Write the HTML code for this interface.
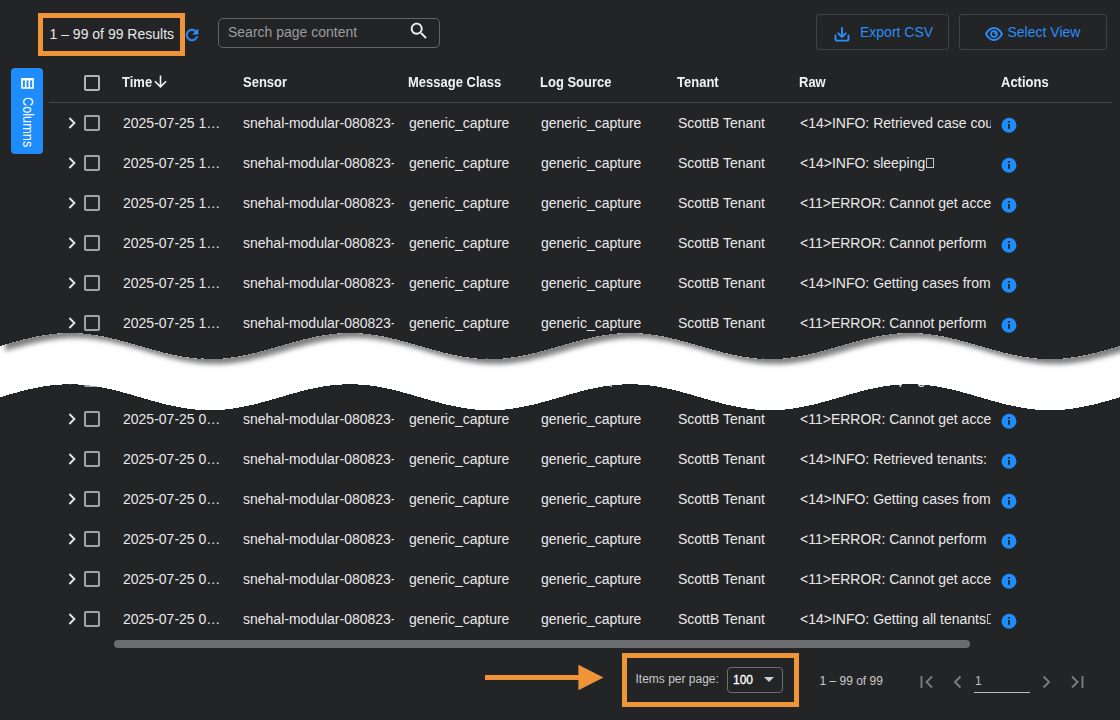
<!DOCTYPE html>
<html><head><meta charset="utf-8"><title>Results</title>
<style>
html,body{margin:0;padding:0;}
body{width:1120px;height:720px;overflow:hidden;background:#232426;font-family:"Liberation Sans",sans-serif;color:#e9e9ea;position:relative;font-size:14px;}
.abs{position:absolute;}
.hl{position:absolute;border:5px solid #f0943a;box-sizing:border-box;}
.res{position:absolute;left:49.5px;top:26px;font-size:14px;line-height:16px;color:#e9e9ea;white-space:nowrap;}
.search{position:absolute;left:218px;top:18px;width:222px;height:30px;box-sizing:border-box;border:1px solid #636467;border-radius:5px;}
.search span{position:absolute;left:9px;top:5px;font-size:14px;line-height:16px;color:#9b9c9e;white-space:nowrap;}
.btn{position:absolute;top:14px;height:36px;box-sizing:border-box;border:1px solid #404145;border-radius:3px;color:#2b8df7;font-size:14px;}
.btn span{position:absolute;top:9px;line-height:16px;white-space:nowrap;}
.coltab{position:absolute;left:11px;top:68px;width:32px;height:86px;background:#1e8cfa;border-radius:4px;}
.coltab span{position:absolute;left:0;top:0;transform-origin:0 0;transform:translate(23.5px,29px) rotate(90deg) scale(0.91,1);font-size:14px;line-height:14px;color:#fff;white-space:nowrap;}
.th{position:absolute;transform:scaleY(1.1);transform-origin:0 12.5px;top:75px;font-size:13px;font-weight:bold;line-height:16px;color:#f2f2f2;white-space:nowrap;}
.cb{position:absolute;left:84px;width:16px;height:16px;box-sizing:border-box;border:2px solid #a4a4a5;border-radius:2px;}
.hdrline{position:absolute;left:49px;top:102px;width:1063px;height:1px;background:#46474a;}
.row{position:absolute;left:0;width:1120px;height:40px;}
.row .cb{top:12px;}
.row .chev{position:absolute;left:68px;top:14.3px;width:8px;height:12px;}
.row .c{position:absolute;top:12px;line-height:16px;font-size:14px;white-space:nowrap;overflow:hidden;color:#e9e9ea;}
.c1{left:123px;width:100px;}
.c2{left:243px;width:150.500px;}
.c3{left:409px;width:120px;}
.c4{left:541px;width:120px;}
.c5{left:678px;width:110px;}
.c6{left:800px;width:191px;}
.row .info{position:absolute;left:1001px;top:13.5px;width:16px;height:16px;}
.nb{display:inline-block;width:6px;height:8px;border:1px solid #c4c4c5;margin-left:1px;vertical-align:0;box-sizing:content-box;}
.sb{position:absolute;left:114px;top:640px;width:856px;height:8px;border-radius:4px;background:#6b6c6e;}
.foot{position:absolute;font-size:12px;line-height:14px;color:#c9c9ca;white-space:nowrap;}
.sel{position:absolute;left:727px;top:667px;width:56px;height:26px;box-sizing:border-box;border:1px solid #6d6e70;border-radius:4px;}
.sel span{position:absolute;left:5px;top:4.500px;font-size:12px;line-height:14px;color:#fff;-webkit-text-stroke:0.300px #fff;}
.pin{position:absolute;left:974px;top:692px;width:56px;height:1px;background:#bdbdbe;}
</style></head><body>

<div class="hl" style="left:38px;top:13px;width:147px;height:43px;"></div>
<div class="res">1 – 99 of 99 Results</div>
<svg class="abs" style="left:182.500px;top:25.800px;width:18px;height:18px" viewBox="0 0 24 24"><path fill="#2b8df7" stroke="#2b8df7" stroke-width="0.700" d="M17.65 6.35C16.2 4.9 14.21 4 12 4c-4.42 0-7.99 3.58-7.99 8s3.57 8 7.99 8c3.73 0 6.84-2.55 7.73-6h-2.08c-.82 2.33-3.04 4-5.65 4-3.31 0-6-2.690-6-6s2.690-6 6-6c1.660 0 3.140.69 4.220 1.780L13 11h7V4l-2.350 2.350z"/></svg>
<div class="search"><span>Search page content</span>
<svg class="abs" style="left:188.500px;top:0.800px;width:22px;height:22px" viewBox="0 0 24 24"><path fill="#f0f0f0" d="M15.5 14h-.79l-.28-.27C15.410 12.590 16 11.110 16 9.500 16 5.910 13.090 3 9.500 3S3 5.910 3 9.500 5.910 16 9.500 16c1.610 0 3.090-.59 4.230-1.570l.27.28v.79l5 4.990L20.490 19l-4.990-5zm-6 0C7.010 14 5 11.990 5 9.500S7.010 5 9.500 5 14 7.010 14 9.500 11.990 14 9.500 14z"/></svg>
</div>

<div class="btn" style="left:816px;width:133px;">
<svg class="abs" style="left:17px;top:11.500px;width:16px;height:15px" viewBox="0 0 16 15"><path d="M8 1 V9.800 M4.300 6.300 L8 10 L11.700 6.300 M1.500 8.500 V12 Q1.500 13.600 3.100 13.600 H12.900 Q14.500 13.600 14.500 12 V8.500" fill="none" stroke="#2b8df7" stroke-width="1.900" stroke-linecap="round" stroke-linejoin="round"/></svg>
<span style="left:43px">Export CSV</span></div>
<div class="btn" style="left:959px;width:148px;">
<svg class="abs" style="left:25px;top:11.800px;width:18px;height:14px" viewBox="0 0 18 14"><path d="M1 7 C3.300 2.700 6.300 1 9 1 S14.700 2.700 17 7 C14.700 11.300 11.700 13 9 13 S3.300 11.300 1 7 Z" fill="none" stroke="#2b8df7" stroke-width="1.800" stroke-linejoin="round"/><circle cx="9" cy="7" r="2.900" fill="none" stroke="#2b8df7" stroke-width="1.700"/><circle cx="10" cy="6.200" r="1" fill="#2b8df7"/></svg>
<span style="left:47.500px">Select View</span></div>

<div class="coltab">
<svg class="abs" style="left:9.500px;top:10px;width:13px;height:11px" viewBox="0 0 13 11"><path d="M1 1.200 H12 V10 H1 Z M4.700 1 V10 M8.300 1 V10" fill="none" stroke="#fff" stroke-width="1.700"/><path d="M0.200 0.200 H12.800 V2.400 H0.200 Z" fill="#fff"/></svg>
<span>Columns</span></div>

<span class="cb" style="top:75px;border-color:#b4b4b5"></span>
<div class="th" style="left:122px">Time</div>
<svg class="abs" style="left:154.200px;top:74.900px;width:13px;height:13px" viewBox="0 0 13 13"><path d="M6.500 0.500 V12 M0.900 6.300 L6.500 11.900 L12.100 6.300" fill="none" stroke="#f2f2f2" stroke-width="1.600"/></svg>
<div class="th" style="left:243px">Sensor</div>
<div class="th" style="left:408px">Message Class</div>
<div class="th" style="left:540px">Log Source</div>
<div class="th" style="left:677px">Tenant</div>
<div class="th" style="left:799px">Raw</div>
<div class="th" style="left:1001px">Actions</div>
<div class="hdrline"></div>

<div class="row" style="top:103px">
<svg class="chev" viewBox="0 0 8 12"><path d="M1.4 1 L6.4 6 L1.4 11" fill="none" stroke="#e6e6e6" stroke-width="1.9"/></svg>
<span class="cb"></span>
<span class="c c1">2025-07-25 1…</span><span class="c c2">snehal-modular-080823-a1</span><span class="c c3">generic_capture</span><span class="c c4">generic_capture</span><span class="c c5">ScottB Tenant</span><span class="c c6">&lt;14&gt;INFO: Retrieved case count</span>
<svg class="info" viewBox="0 0 16 16"><circle cx="8" cy="8.200" r="7.450" fill="#1e8cfa"/><rect x="7.1" y="7" width="1.8" height="5" fill="#232426"/><rect x="7.1" y="4" width="1.8" height="1.8" fill="#232426"/></svg>
</div><div class="row" style="top:143px">
<svg class="chev" viewBox="0 0 8 12"><path d="M1.4 1 L6.4 6 L1.4 11" fill="none" stroke="#e6e6e6" stroke-width="1.9"/></svg>
<span class="cb"></span>
<span class="c c1">2025-07-25 1…</span><span class="c c2">snehal-modular-080823-a1</span><span class="c c3">generic_capture</span><span class="c c4">generic_capture</span><span class="c c5">ScottB Tenant</span><span class="c c6">&lt;14&gt;INFO: sleeping<i class=nb></i></span>
<svg class="info" viewBox="0 0 16 16"><circle cx="8" cy="8.200" r="7.450" fill="#1e8cfa"/><rect x="7.1" y="7" width="1.8" height="5" fill="#232426"/><rect x="7.1" y="4" width="1.8" height="1.8" fill="#232426"/></svg>
</div><div class="row" style="top:183px">
<svg class="chev" viewBox="0 0 8 12"><path d="M1.4 1 L6.4 6 L1.4 11" fill="none" stroke="#e6e6e6" stroke-width="1.9"/></svg>
<span class="cb"></span>
<span class="c c1">2025-07-25 1…</span><span class="c c2">snehal-modular-080823-a1</span><span class="c c3">generic_capture</span><span class="c c4">generic_capture</span><span class="c c5">ScottB Tenant</span><span class="c c6">&lt;11&gt;ERROR: Cannot get access</span>
<svg class="info" viewBox="0 0 16 16"><circle cx="8" cy="8.200" r="7.450" fill="#1e8cfa"/><rect x="7.1" y="7" width="1.8" height="5" fill="#232426"/><rect x="7.1" y="4" width="1.8" height="1.8" fill="#232426"/></svg>
</div><div class="row" style="top:223px">
<svg class="chev" viewBox="0 0 8 12"><path d="M1.4 1 L6.4 6 L1.4 11" fill="none" stroke="#e6e6e6" stroke-width="1.9"/></svg>
<span class="cb"></span>
<span class="c c1">2025-07-25 1…</span><span class="c c2">snehal-modular-080823-a1</span><span class="c c3">generic_capture</span><span class="c c4">generic_capture</span><span class="c c5">ScottB Tenant</span><span class="c c6">&lt;11&gt;ERROR: Cannot perform</span>
<svg class="info" viewBox="0 0 16 16"><circle cx="8" cy="8.200" r="7.450" fill="#1e8cfa"/><rect x="7.1" y="7" width="1.8" height="5" fill="#232426"/><rect x="7.1" y="4" width="1.8" height="1.8" fill="#232426"/></svg>
</div><div class="row" style="top:263px">
<svg class="chev" viewBox="0 0 8 12"><path d="M1.4 1 L6.4 6 L1.4 11" fill="none" stroke="#e6e6e6" stroke-width="1.9"/></svg>
<span class="cb"></span>
<span class="c c1">2025-07-25 1…</span><span class="c c2">snehal-modular-080823-a1</span><span class="c c3">generic_capture</span><span class="c c4">generic_capture</span><span class="c c5">ScottB Tenant</span><span class="c c6">&lt;14&gt;INFO: Getting cases from</span>
<svg class="info" viewBox="0 0 16 16"><circle cx="8" cy="8.200" r="7.450" fill="#1e8cfa"/><rect x="7.1" y="7" width="1.8" height="5" fill="#232426"/><rect x="7.1" y="4" width="1.8" height="1.8" fill="#232426"/></svg>
</div><div class="row" style="top:303px">
<svg class="chev" viewBox="0 0 8 12"><path d="M1.4 1 L6.4 6 L1.4 11" fill="none" stroke="#e6e6e6" stroke-width="1.9"/></svg>
<span class="cb"></span>
<span class="c c1">2025-07-25 1…</span><span class="c c2">snehal-modular-080823-a1</span><span class="c c3">generic_capture</span><span class="c c4">generic_capture</span><span class="c c5">ScottB Tenant</span><span class="c c6">&lt;11&gt;ERROR: Cannot perform</span>
<svg class="info" viewBox="0 0 16 16"><circle cx="8" cy="8.200" r="7.450" fill="#1e8cfa"/><rect x="7.1" y="7" width="1.8" height="5" fill="#232426"/><rect x="7.1" y="4" width="1.8" height="1.8" fill="#232426"/></svg>
</div><div class="row" style="top:343px">
<svg class="chev" viewBox="0 0 8 12"><path d="M1.4 1 L6.4 6 L1.4 11" fill="none" stroke="#e6e6e6" stroke-width="1.9"/></svg>
<span class="cb"></span>
<span class="c c1">2025-07-25 1…</span><span class="c c2">snehal-modular-080823-a1</span><span class="c c3">generic_capture</span><span class="c c4">generic_capture</span><span class="c c5">ScottB Tenant</span><span class="c c6">&lt;14&gt;INFO: Getting cases from</span>
<svg class="info" viewBox="0 0 16 16"><circle cx="8" cy="8.200" r="7.450" fill="#1e8cfa"/><rect x="7.1" y="7" width="1.8" height="5" fill="#232426"/><rect x="7.1" y="4" width="1.8" height="1.8" fill="#232426"/></svg>
</div>
<div class="row" style="top:359px">
<svg class="chev" viewBox="0 0 8 12"><path d="M1.4 1 L6.4 6 L1.4 11" fill="none" stroke="#e6e6e6" stroke-width="1.9"/></svg>
<span class="cb"></span>
<span class="c c1">2025-07-25 0…</span><span class="c c2">snehal-modular-080823-a1</span><span class="c c3">generic_capture</span><span class="c c4">generic_capture</span><span class="c c5">ScottB Tenant</span><span class="c c6">&lt;14&gt;INFO: sleeping<i class=nb></i></span>
<svg class="info" viewBox="0 0 16 16"><circle cx="8" cy="8.200" r="7.450" fill="#1e8cfa"/><rect x="7.1" y="7" width="1.8" height="5" fill="#232426"/><rect x="7.1" y="4" width="1.8" height="1.8" fill="#232426"/></svg>
</div><div class="row" style="top:399px">
<svg class="chev" viewBox="0 0 8 12"><path d="M1.4 1 L6.4 6 L1.4 11" fill="none" stroke="#e6e6e6" stroke-width="1.9"/></svg>
<span class="cb"></span>
<span class="c c1">2025-07-25 0…</span><span class="c c2">snehal-modular-080823-a1</span><span class="c c3">generic_capture</span><span class="c c4">generic_capture</span><span class="c c5">ScottB Tenant</span><span class="c c6">&lt;11&gt;ERROR: Cannot get access</span>
<svg class="info" viewBox="0 0 16 16"><circle cx="8" cy="8.200" r="7.450" fill="#1e8cfa"/><rect x="7.1" y="7" width="1.8" height="5" fill="#232426"/><rect x="7.1" y="4" width="1.8" height="1.8" fill="#232426"/></svg>
</div><div class="row" style="top:439px">
<svg class="chev" viewBox="0 0 8 12"><path d="M1.4 1 L6.4 6 L1.4 11" fill="none" stroke="#e6e6e6" stroke-width="1.9"/></svg>
<span class="cb"></span>
<span class="c c1">2025-07-25 0…</span><span class="c c2">snehal-modular-080823-a1</span><span class="c c3">generic_capture</span><span class="c c4">generic_capture</span><span class="c c5">ScottB Tenant</span><span class="c c6">&lt;14&gt;INFO: Retrieved tenants:</span>
<svg class="info" viewBox="0 0 16 16"><circle cx="8" cy="8.200" r="7.450" fill="#1e8cfa"/><rect x="7.1" y="7" width="1.8" height="5" fill="#232426"/><rect x="7.1" y="4" width="1.8" height="1.8" fill="#232426"/></svg>
</div><div class="row" style="top:479px">
<svg class="chev" viewBox="0 0 8 12"><path d="M1.4 1 L6.4 6 L1.4 11" fill="none" stroke="#e6e6e6" stroke-width="1.9"/></svg>
<span class="cb"></span>
<span class="c c1">2025-07-25 0…</span><span class="c c2">snehal-modular-080823-a1</span><span class="c c3">generic_capture</span><span class="c c4">generic_capture</span><span class="c c5">ScottB Tenant</span><span class="c c6">&lt;14&gt;INFO: Getting cases from</span>
<svg class="info" viewBox="0 0 16 16"><circle cx="8" cy="8.200" r="7.450" fill="#1e8cfa"/><rect x="7.1" y="7" width="1.8" height="5" fill="#232426"/><rect x="7.1" y="4" width="1.8" height="1.8" fill="#232426"/></svg>
</div><div class="row" style="top:519px">
<svg class="chev" viewBox="0 0 8 12"><path d="M1.4 1 L6.4 6 L1.4 11" fill="none" stroke="#e6e6e6" stroke-width="1.9"/></svg>
<span class="cb"></span>
<span class="c c1">2025-07-25 0…</span><span class="c c2">snehal-modular-080823-a1</span><span class="c c3">generic_capture</span><span class="c c4">generic_capture</span><span class="c c5">ScottB Tenant</span><span class="c c6">&lt;11&gt;ERROR: Cannot perform</span>
<svg class="info" viewBox="0 0 16 16"><circle cx="8" cy="8.200" r="7.450" fill="#1e8cfa"/><rect x="7.1" y="7" width="1.8" height="5" fill="#232426"/><rect x="7.1" y="4" width="1.8" height="1.8" fill="#232426"/></svg>
</div><div class="row" style="top:559px">
<svg class="chev" viewBox="0 0 8 12"><path d="M1.4 1 L6.4 6 L1.4 11" fill="none" stroke="#e6e6e6" stroke-width="1.9"/></svg>
<span class="cb"></span>
<span class="c c1">2025-07-25 0…</span><span class="c c2">snehal-modular-080823-a1</span><span class="c c3">generic_capture</span><span class="c c4">generic_capture</span><span class="c c5">ScottB Tenant</span><span class="c c6">&lt;11&gt;ERROR: Cannot get access</span>
<svg class="info" viewBox="0 0 16 16"><circle cx="8" cy="8.200" r="7.450" fill="#1e8cfa"/><rect x="7.1" y="7" width="1.8" height="5" fill="#232426"/><rect x="7.1" y="4" width="1.8" height="1.8" fill="#232426"/></svg>
</div><div class="row" style="top:599px">
<svg class="chev" viewBox="0 0 8 12"><path d="M1.4 1 L6.4 6 L1.4 11" fill="none" stroke="#e6e6e6" stroke-width="1.9"/></svg>
<span class="cb"></span>
<span class="c c1">2025-07-25 0…</span><span class="c c2">snehal-modular-080823-a1</span><span class="c c3">generic_capture</span><span class="c c4">generic_capture</span><span class="c c5">ScottB Tenant</span><span class="c c6">&lt;14&gt;INFO: Getting all tenants<i class=nb></i></span>
<svg class="info" viewBox="0 0 16 16"><circle cx="8" cy="8.200" r="7.450" fill="#1e8cfa"/><rect x="7.1" y="7" width="1.8" height="5" fill="#232426"/><rect x="7.1" y="4" width="1.8" height="1.8" fill="#232426"/></svg>
</div>

<div class="sb"></div>

<svg class="abs" style="left:0;top:300px;width:1120px;height:130px" viewBox="0 300 1120 130">
<defs><filter id="sh" x="-5%" y="-20%" width="110%" height="160%"><feGaussianBlur stdDeviation="2.500"/></filter>
<clipPath id="bandclip"><path d="M0,346.0 L4,344.8 L8,343.7 L12,342.5 L16,341.4 L20,340.4 L24,339.3 L28,338.4 L32,337.4 L36,336.6 L40,335.8 L44,335.2 L48,334.6 L52,334.0 L56,333.6 L60,333.3 L64,333.1 L68,333.0 L72,333.0 L76,333.1 L80,333.3 L84,333.6 L88,334.0 L92,334.6 L96,335.2 L100,335.8 L104,336.6 L108,337.4 L112,338.4 L116,339.3 L120,340.4 L124,341.4 L128,342.5 L132,343.7 L136,344.8 L140,346.0 L144,347.2 L148,348.3 L152,349.5 L156,350.6 L160,351.6 L164,352.7 L168,353.6 L172,354.6 L176,355.4 L180,356.2 L184,356.8 L188,357.4 L192,358.0 L196,358.4 L200,358.7 L204,358.9 L208,359.0 L212,359.0 L216,358.9 L220,358.7 L224,358.4 L228,358.0 L232,357.4 L236,356.8 L240,356.2 L244,355.4 L248,354.6 L252,353.6 L256,352.7 L260,351.6 L264,350.6 L268,349.5 L272,348.3 L276,347.2 L280,346.0 L284,344.8 L288,343.7 L292,342.5 L296,341.4 L300,340.4 L304,339.3 L308,338.4 L312,337.4 L316,336.6 L320,335.8 L324,335.2 L328,334.6 L332,334.0 L336,333.6 L340,333.3 L344,333.1 L348,333.0 L352,333.0 L356,333.1 L360,333.3 L364,333.6 L368,334.0 L372,334.6 L376,335.2 L380,335.8 L384,336.6 L388,337.4 L392,338.4 L396,339.3 L400,340.4 L404,341.4 L408,342.5 L412,343.7 L416,344.8 L420,346.0 L424,347.2 L428,348.3 L432,349.5 L436,350.6 L440,351.6 L444,352.7 L448,353.6 L452,354.6 L456,355.4 L460,356.2 L464,356.8 L468,357.4 L472,358.0 L476,358.4 L480,358.7 L484,358.9 L488,359.0 L492,359.0 L496,358.9 L500,358.7 L504,358.4 L508,358.0 L512,357.4 L516,356.8 L520,356.2 L524,355.4 L528,354.6 L532,353.6 L536,352.7 L540,351.6 L544,350.6 L548,349.5 L552,348.3 L556,347.2 L560,346.0 L564,344.8 L568,343.7 L572,342.5 L576,341.4 L580,340.4 L584,339.3 L588,338.4 L592,337.4 L596,336.6 L600,335.8 L604,335.2 L608,334.6 L612,334.0 L616,333.6 L620,333.3 L624,333.1 L628,333.0 L632,333.0 L636,333.1 L640,333.3 L644,333.6 L648,334.0 L652,334.6 L656,335.2 L660,335.8 L664,336.6 L668,337.4 L672,338.4 L676,339.3 L680,340.4 L684,341.4 L688,342.5 L692,343.7 L696,344.8 L700,346.0 L704,347.2 L708,348.3 L712,349.5 L716,350.6 L720,351.6 L724,352.7 L728,353.6 L732,354.6 L736,355.4 L740,356.2 L744,356.8 L748,357.4 L752,358.0 L756,358.4 L760,358.7 L764,358.9 L768,359.0 L772,359.0 L776,358.9 L780,358.7 L784,358.4 L788,358.0 L792,357.4 L796,356.8 L800,356.2 L804,355.4 L808,354.6 L812,353.6 L816,352.7 L820,351.6 L824,350.6 L828,349.5 L832,348.3 L836,347.2 L840,346.0 L844,344.8 L848,343.7 L852,342.5 L856,341.4 L860,340.4 L864,339.3 L868,338.4 L872,337.4 L876,336.6 L880,335.8 L884,335.2 L888,334.6 L892,334.0 L896,333.6 L900,333.3 L904,333.1 L908,333.0 L912,333.0 L916,333.1 L920,333.3 L924,333.6 L928,334.0 L932,334.6 L936,335.2 L940,335.8 L944,336.6 L948,337.4 L952,338.4 L956,339.3 L960,340.4 L964,341.4 L968,342.5 L972,343.7 L976,344.8 L980,346.0 L984,347.2 L988,348.3 L992,349.5 L996,350.6 L1000,351.6 L1004,352.7 L1008,353.6 L1012,354.6 L1016,355.4 L1020,356.2 L1024,356.8 L1028,357.4 L1032,358.0 L1036,358.4 L1040,358.7 L1044,358.9 L1048,359.0 L1052,359.0 L1056,358.9 L1060,358.7 L1064,358.4 L1068,358.0 L1072,357.4 L1076,356.8 L1080,356.2 L1084,355.4 L1088,354.6 L1092,353.6 L1096,352.7 L1100,351.6 L1104,350.6 L1108,349.5 L1112,348.3 L1116,347.2 L1120,346.0 L1120,397.3 L1116,398.4 L1112,399.6 L1108,400.7 L1104,401.8 L1100,402.9 L1096,403.9 L1092,404.9 L1088,405.8 L1084,406.6 L1080,407.4 L1076,408.1 L1072,408.7 L1068,409.2 L1064,409.6 L1060,409.9 L1056,410.1 L1052,410.2 L1048,410.2 L1044,410.1 L1040,409.9 L1036,409.6 L1032,409.2 L1028,408.7 L1024,408.1 L1020,407.4 L1016,406.6 L1012,405.8 L1008,404.9 L1004,403.9 L1000,402.9 L996,401.8 L992,400.7 L988,399.6 L984,398.4 L980,397.2 L976,396.1 L972,394.9 L968,393.8 L964,392.7 L960,391.6 L956,390.6 L952,389.6 L948,388.7 L944,387.9 L940,387.1 L936,386.4 L932,385.8 L928,385.3 L924,384.9 L920,384.6 L916,384.4 L912,384.3 L908,384.3 L904,384.4 L900,384.6 L896,384.9 L892,385.3 L888,385.8 L884,386.4 L880,387.1 L876,387.9 L872,388.7 L868,389.6 L864,390.6 L860,391.6 L856,392.7 L852,393.8 L848,394.9 L844,396.1 L840,397.2 L836,398.4 L832,399.6 L828,400.7 L824,401.8 L820,402.9 L816,403.9 L812,404.9 L808,405.8 L804,406.6 L800,407.4 L796,408.1 L792,408.7 L788,409.2 L784,409.6 L780,409.9 L776,410.1 L772,410.2 L768,410.2 L764,410.1 L760,409.9 L756,409.6 L752,409.2 L748,408.7 L744,408.1 L740,407.4 L736,406.6 L732,405.8 L728,404.9 L724,403.9 L720,402.9 L716,401.8 L712,400.7 L708,399.6 L704,398.4 L700,397.2 L696,396.1 L692,394.9 L688,393.8 L684,392.7 L680,391.6 L676,390.6 L672,389.6 L668,388.7 L664,387.9 L660,387.1 L656,386.4 L652,385.8 L648,385.3 L644,384.9 L640,384.6 L636,384.4 L632,384.3 L628,384.3 L624,384.4 L620,384.6 L616,384.9 L612,385.3 L608,385.8 L604,386.4 L600,387.1 L596,387.9 L592,388.7 L588,389.6 L584,390.6 L580,391.6 L576,392.7 L572,393.8 L568,394.9 L564,396.1 L560,397.2 L556,398.4 L552,399.6 L548,400.7 L544,401.8 L540,402.9 L536,403.9 L532,404.9 L528,405.8 L524,406.6 L520,407.4 L516,408.1 L512,408.7 L508,409.2 L504,409.6 L500,409.9 L496,410.1 L492,410.2 L488,410.2 L484,410.1 L480,409.9 L476,409.6 L472,409.2 L468,408.7 L464,408.1 L460,407.4 L456,406.6 L452,405.8 L448,404.9 L444,403.9 L440,402.9 L436,401.8 L432,400.7 L428,399.6 L424,398.4 L420,397.2 L416,396.1 L412,394.9 L408,393.8 L404,392.7 L400,391.6 L396,390.6 L392,389.6 L388,388.7 L384,387.9 L380,387.1 L376,386.4 L372,385.8 L368,385.3 L364,384.9 L360,384.6 L356,384.4 L352,384.3 L348,384.3 L344,384.4 L340,384.6 L336,384.9 L332,385.3 L328,385.8 L324,386.4 L320,387.1 L316,387.9 L312,388.7 L308,389.6 L304,390.6 L300,391.6 L296,392.7 L292,393.8 L288,394.9 L284,396.1 L280,397.2 L276,398.4 L272,399.6 L268,400.7 L264,401.8 L260,402.9 L256,403.9 L252,404.9 L248,405.8 L244,406.6 L240,407.4 L236,408.1 L232,408.7 L228,409.2 L224,409.6 L220,409.9 L216,410.1 L212,410.2 L208,410.2 L204,410.1 L200,409.9 L196,409.6 L192,409.2 L188,408.7 L184,408.1 L180,407.4 L176,406.6 L172,405.8 L168,404.9 L164,403.9 L160,402.9 L156,401.8 L152,400.7 L148,399.6 L144,398.4 L140,397.2 L136,396.1 L132,394.9 L128,393.8 L124,392.7 L120,391.6 L116,390.6 L112,389.6 L108,388.7 L104,387.9 L100,387.1 L96,386.4 L92,385.8 L88,385.3 L84,384.9 L80,384.6 L76,384.4 L72,384.3 L68,384.3 L64,384.4 L60,384.6 L56,384.9 L52,385.3 L48,385.8 L44,386.4 L40,387.1 L36,387.9 L32,388.7 L28,389.6 L24,390.6 L20,391.6 L16,392.7 L12,393.8 L8,394.9 L4,396.1 L0,397.2 Z"/></clipPath></defs>
<path d="M0,346.0 L4,344.8 L8,343.7 L12,342.5 L16,341.4 L20,340.4 L24,339.3 L28,338.4 L32,337.4 L36,336.6 L40,335.8 L44,335.2 L48,334.6 L52,334.0 L56,333.6 L60,333.3 L64,333.1 L68,333.0 L72,333.0 L76,333.1 L80,333.3 L84,333.6 L88,334.0 L92,334.6 L96,335.2 L100,335.8 L104,336.6 L108,337.4 L112,338.4 L116,339.3 L120,340.4 L124,341.4 L128,342.5 L132,343.7 L136,344.8 L140,346.0 L144,347.2 L148,348.3 L152,349.5 L156,350.6 L160,351.6 L164,352.7 L168,353.6 L172,354.6 L176,355.4 L180,356.2 L184,356.8 L188,357.4 L192,358.0 L196,358.4 L200,358.7 L204,358.9 L208,359.0 L212,359.0 L216,358.9 L220,358.7 L224,358.4 L228,358.0 L232,357.4 L236,356.8 L240,356.2 L244,355.4 L248,354.6 L252,353.6 L256,352.7 L260,351.6 L264,350.6 L268,349.5 L272,348.3 L276,347.2 L280,346.0 L284,344.8 L288,343.7 L292,342.5 L296,341.4 L300,340.4 L304,339.3 L308,338.4 L312,337.4 L316,336.6 L320,335.8 L324,335.2 L328,334.6 L332,334.0 L336,333.6 L340,333.3 L344,333.1 L348,333.0 L352,333.0 L356,333.1 L360,333.3 L364,333.6 L368,334.0 L372,334.6 L376,335.2 L380,335.8 L384,336.6 L388,337.4 L392,338.4 L396,339.3 L400,340.4 L404,341.4 L408,342.5 L412,343.7 L416,344.8 L420,346.0 L424,347.2 L428,348.3 L432,349.5 L436,350.6 L440,351.6 L444,352.7 L448,353.6 L452,354.6 L456,355.4 L460,356.2 L464,356.8 L468,357.4 L472,358.0 L476,358.4 L480,358.7 L484,358.9 L488,359.0 L492,359.0 L496,358.9 L500,358.7 L504,358.4 L508,358.0 L512,357.4 L516,356.8 L520,356.2 L524,355.4 L528,354.6 L532,353.6 L536,352.7 L540,351.6 L544,350.6 L548,349.5 L552,348.3 L556,347.2 L560,346.0 L564,344.8 L568,343.7 L572,342.5 L576,341.4 L580,340.4 L584,339.3 L588,338.4 L592,337.4 L596,336.6 L600,335.8 L604,335.2 L608,334.6 L612,334.0 L616,333.6 L620,333.3 L624,333.1 L628,333.0 L632,333.0 L636,333.1 L640,333.3 L644,333.6 L648,334.0 L652,334.6 L656,335.2 L660,335.8 L664,336.6 L668,337.4 L672,338.4 L676,339.3 L680,340.4 L684,341.4 L688,342.5 L692,343.7 L696,344.8 L700,346.0 L704,347.2 L708,348.3 L712,349.5 L716,350.6 L720,351.6 L724,352.7 L728,353.6 L732,354.6 L736,355.4 L740,356.2 L744,356.8 L748,357.4 L752,358.0 L756,358.4 L760,358.7 L764,358.9 L768,359.0 L772,359.0 L776,358.9 L780,358.7 L784,358.4 L788,358.0 L792,357.4 L796,356.8 L800,356.2 L804,355.4 L808,354.6 L812,353.6 L816,352.7 L820,351.6 L824,350.6 L828,349.5 L832,348.3 L836,347.2 L840,346.0 L844,344.8 L848,343.7 L852,342.5 L856,341.4 L860,340.4 L864,339.3 L868,338.4 L872,337.4 L876,336.6 L880,335.8 L884,335.2 L888,334.6 L892,334.0 L896,333.6 L900,333.3 L904,333.1 L908,333.0 L912,333.0 L916,333.1 L920,333.3 L924,333.6 L928,334.0 L932,334.6 L936,335.2 L940,335.8 L944,336.6 L948,337.4 L952,338.4 L956,339.3 L960,340.4 L964,341.4 L968,342.5 L972,343.7 L976,344.8 L980,346.0 L984,347.2 L988,348.3 L992,349.5 L996,350.6 L1000,351.6 L1004,352.7 L1008,353.6 L1012,354.6 L1016,355.4 L1020,356.2 L1024,356.8 L1028,357.4 L1032,358.0 L1036,358.4 L1040,358.7 L1044,358.9 L1048,359.0 L1052,359.0 L1056,358.9 L1060,358.7 L1064,358.4 L1068,358.0 L1072,357.4 L1076,356.8 L1080,356.2 L1084,355.4 L1088,354.6 L1092,353.6 L1096,352.7 L1100,351.6 L1104,350.6 L1108,349.5 L1112,348.3 L1116,347.2 L1120,346.0 L1120,397.3 L1116,398.4 L1112,399.6 L1108,400.7 L1104,401.8 L1100,402.9 L1096,403.9 L1092,404.9 L1088,405.8 L1084,406.6 L1080,407.4 L1076,408.1 L1072,408.7 L1068,409.2 L1064,409.6 L1060,409.9 L1056,410.1 L1052,410.2 L1048,410.2 L1044,410.1 L1040,409.9 L1036,409.6 L1032,409.2 L1028,408.7 L1024,408.1 L1020,407.4 L1016,406.6 L1012,405.8 L1008,404.9 L1004,403.9 L1000,402.9 L996,401.8 L992,400.7 L988,399.6 L984,398.4 L980,397.2 L976,396.1 L972,394.9 L968,393.8 L964,392.7 L960,391.6 L956,390.6 L952,389.6 L948,388.7 L944,387.9 L940,387.1 L936,386.4 L932,385.8 L928,385.3 L924,384.9 L920,384.6 L916,384.4 L912,384.3 L908,384.3 L904,384.4 L900,384.6 L896,384.9 L892,385.3 L888,385.8 L884,386.4 L880,387.1 L876,387.9 L872,388.7 L868,389.6 L864,390.6 L860,391.6 L856,392.7 L852,393.8 L848,394.9 L844,396.1 L840,397.2 L836,398.4 L832,399.6 L828,400.7 L824,401.8 L820,402.9 L816,403.9 L812,404.9 L808,405.8 L804,406.6 L800,407.4 L796,408.1 L792,408.7 L788,409.2 L784,409.6 L780,409.9 L776,410.1 L772,410.2 L768,410.2 L764,410.1 L760,409.9 L756,409.6 L752,409.2 L748,408.7 L744,408.1 L740,407.4 L736,406.6 L732,405.8 L728,404.9 L724,403.9 L720,402.9 L716,401.8 L712,400.7 L708,399.6 L704,398.4 L700,397.2 L696,396.1 L692,394.9 L688,393.8 L684,392.7 L680,391.6 L676,390.6 L672,389.6 L668,388.7 L664,387.9 L660,387.1 L656,386.4 L652,385.8 L648,385.3 L644,384.9 L640,384.6 L636,384.4 L632,384.3 L628,384.3 L624,384.4 L620,384.6 L616,384.9 L612,385.3 L608,385.8 L604,386.4 L600,387.1 L596,387.9 L592,388.7 L588,389.6 L584,390.6 L580,391.6 L576,392.7 L572,393.8 L568,394.9 L564,396.1 L560,397.2 L556,398.4 L552,399.6 L548,400.7 L544,401.8 L540,402.9 L536,403.9 L532,404.9 L528,405.8 L524,406.6 L520,407.4 L516,408.1 L512,408.7 L508,409.2 L504,409.6 L500,409.9 L496,410.1 L492,410.2 L488,410.2 L484,410.1 L480,409.9 L476,409.6 L472,409.2 L468,408.7 L464,408.1 L460,407.4 L456,406.6 L452,405.8 L448,404.9 L444,403.9 L440,402.9 L436,401.8 L432,400.7 L428,399.6 L424,398.4 L420,397.2 L416,396.1 L412,394.9 L408,393.8 L404,392.7 L400,391.6 L396,390.6 L392,389.6 L388,388.7 L384,387.9 L380,387.1 L376,386.4 L372,385.8 L368,385.3 L364,384.9 L360,384.6 L356,384.4 L352,384.3 L348,384.3 L344,384.4 L340,384.6 L336,384.9 L332,385.3 L328,385.8 L324,386.4 L320,387.1 L316,387.9 L312,388.7 L308,389.6 L304,390.6 L300,391.6 L296,392.7 L292,393.8 L288,394.9 L284,396.1 L280,397.2 L276,398.4 L272,399.6 L268,400.7 L264,401.8 L260,402.9 L256,403.9 L252,404.9 L248,405.8 L244,406.6 L240,407.4 L236,408.1 L232,408.7 L228,409.2 L224,409.6 L220,409.9 L216,410.1 L212,410.2 L208,410.2 L204,410.1 L200,409.9 L196,409.6 L192,409.2 L188,408.7 L184,408.1 L180,407.4 L176,406.6 L172,405.8 L168,404.9 L164,403.9 L160,402.9 L156,401.8 L152,400.7 L148,399.6 L144,398.4 L140,397.2 L136,396.1 L132,394.9 L128,393.8 L124,392.7 L120,391.6 L116,390.6 L112,389.6 L108,388.7 L104,387.9 L100,387.1 L96,386.4 L92,385.8 L88,385.3 L84,384.9 L80,384.6 L76,384.4 L72,384.3 L68,384.3 L64,384.4 L60,384.6 L56,384.9 L52,385.3 L48,385.8 L44,386.4 L40,387.1 L36,387.9 L32,388.7 L28,389.6 L24,390.6 L20,391.6 L16,392.7 L12,393.8 L8,394.9 L4,396.1 L0,397.2 Z" fill="#ffffff" shape-rendering="crispEdges"/>
<g clip-path="url(#bandclip)"><path d="M0,300 L1120,300 L1120,346.0 L1116,347.2 L1112,348.3 L1108,349.5 L1104,350.6 L1100,351.6 L1096,352.7 L1092,353.6 L1088,354.6 L1084,355.4 L1080,356.2 L1076,356.8 L1072,357.4 L1068,358.0 L1064,358.4 L1060,358.7 L1056,358.9 L1052,359.0 L1048,359.0 L1044,358.9 L1040,358.7 L1036,358.4 L1032,358.0 L1028,357.4 L1024,356.8 L1020,356.2 L1016,355.4 L1012,354.6 L1008,353.6 L1004,352.7 L1000,351.6 L996,350.6 L992,349.5 L988,348.3 L984,347.2 L980,346.0 L976,344.8 L972,343.7 L968,342.5 L964,341.4 L960,340.4 L956,339.3 L952,338.4 L948,337.4 L944,336.6 L940,335.8 L936,335.2 L932,334.6 L928,334.0 L924,333.6 L920,333.3 L916,333.1 L912,333.0 L908,333.0 L904,333.1 L900,333.3 L896,333.6 L892,334.0 L888,334.6 L884,335.2 L880,335.8 L876,336.6 L872,337.4 L868,338.4 L864,339.3 L860,340.4 L856,341.4 L852,342.5 L848,343.7 L844,344.8 L840,346.0 L836,347.2 L832,348.3 L828,349.5 L824,350.6 L820,351.6 L816,352.7 L812,353.6 L808,354.6 L804,355.4 L800,356.2 L796,356.8 L792,357.4 L788,358.0 L784,358.4 L780,358.7 L776,358.9 L772,359.0 L768,359.0 L764,358.9 L760,358.7 L756,358.4 L752,358.0 L748,357.4 L744,356.8 L740,356.2 L736,355.4 L732,354.6 L728,353.6 L724,352.7 L720,351.6 L716,350.6 L712,349.5 L708,348.3 L704,347.2 L700,346.0 L696,344.8 L692,343.7 L688,342.5 L684,341.4 L680,340.4 L676,339.3 L672,338.4 L668,337.4 L664,336.6 L660,335.8 L656,335.2 L652,334.6 L648,334.0 L644,333.6 L640,333.3 L636,333.1 L632,333.0 L628,333.0 L624,333.1 L620,333.3 L616,333.6 L612,334.0 L608,334.6 L604,335.2 L600,335.8 L596,336.6 L592,337.4 L588,338.4 L584,339.3 L580,340.4 L576,341.4 L572,342.5 L568,343.7 L564,344.8 L560,346.0 L556,347.2 L552,348.3 L548,349.5 L544,350.6 L540,351.6 L536,352.7 L532,353.6 L528,354.6 L524,355.4 L520,356.2 L516,356.8 L512,357.4 L508,358.0 L504,358.4 L500,358.7 L496,358.9 L492,359.0 L488,359.0 L484,358.9 L480,358.7 L476,358.4 L472,358.0 L468,357.4 L464,356.8 L460,356.2 L456,355.4 L452,354.6 L448,353.6 L444,352.7 L440,351.6 L436,350.6 L432,349.5 L428,348.3 L424,347.2 L420,346.0 L416,344.8 L412,343.7 L408,342.5 L404,341.4 L400,340.4 L396,339.3 L392,338.4 L388,337.4 L384,336.6 L380,335.8 L376,335.2 L372,334.6 L368,334.0 L364,333.6 L360,333.3 L356,333.1 L352,333.0 L348,333.0 L344,333.1 L340,333.3 L336,333.6 L332,334.0 L328,334.6 L324,335.2 L320,335.8 L316,336.6 L312,337.4 L308,338.4 L304,339.3 L300,340.4 L296,341.4 L292,342.5 L288,343.7 L284,344.8 L280,346.0 L276,347.2 L272,348.3 L268,349.5 L264,350.6 L260,351.6 L256,352.7 L252,353.6 L248,354.6 L244,355.4 L240,356.2 L236,356.8 L232,357.4 L228,358.0 L224,358.4 L220,358.7 L216,358.9 L212,359.0 L208,359.0 L204,358.9 L200,358.7 L196,358.4 L192,358.0 L188,357.4 L184,356.8 L180,356.2 L176,355.4 L172,354.6 L168,353.6 L164,352.7 L160,351.6 L156,350.6 L152,349.5 L148,348.3 L144,347.2 L140,346.0 L136,344.8 L132,343.7 L128,342.5 L124,341.4 L120,340.4 L116,339.3 L112,338.4 L108,337.4 L104,336.6 L100,335.8 L96,335.2 L92,334.6 L88,334.0 L84,333.6 L80,333.3 L76,333.1 L72,333.0 L68,333.0 L64,333.1 L60,333.3 L56,333.6 L52,334.0 L48,334.6 L44,335.2 L40,335.8 L36,336.6 L32,337.4 L28,338.4 L24,339.3 L20,340.4 L16,341.4 L12,342.5 L8,343.7 L4,344.8 L0,346.0 Z" fill="#000" opacity="0.500" filter="url(#sh)" transform="translate(5,5)"/></g>
</svg>

<svg class="abs" style="left:480px;top:660px;width:130px;height:36px" viewBox="480 660 130 36"><path d="M485 675 H578.400 V664.800 L603.400 677.500 L578.400 690.200 V680 H485 Z" fill="#f0943a"/></svg>
<div class="hl" style="left:622px;top:653px;width:177px;height:54px;border-width:5px;"></div>
<div class="foot" style="left:635.500px;top:672px;">Items per page:</div>
<div class="sel"><span>100</span>
<svg class="abs" style="left:35.500px;top:9px;width:10px;height:5px" viewBox="0 0 10 5"><path d="M0 0 H10 L5 5 Z" fill="#d0d0d0"/></svg></div>
<div class="foot" style="left:819.500px;top:674px;">1 – 99 of 99</div>
<svg class="abs" style="left:919.800px;top:675px;width:14px;height:14px" viewBox="0 0 14 14"><path d="M1.500 1 V13 M12 1.500 L6.500 7 L12 12.500" fill="none" stroke="#7b7c7e" stroke-width="1.900"/></svg>
<svg class="abs" style="left:952px;top:675px;width:10px;height:14px" viewBox="0 0 10 14"><path d="M8.500 1.500 L3 7 L8.500 12.500" fill="none" stroke="#7b7c7e" stroke-width="1.900"/></svg>
<div class="foot" style="left:975px;top:674px;color:#bebebf;font-size:12px">1</div>
<div class="pin"></div>
<svg class="abs" style="left:1041.700px;top:675px;width:10px;height:14px" viewBox="0 0 10 14"><path d="M1.500 1.500 L7 7 L1.500 12.500" fill="none" stroke="#7b7c7e" stroke-width="1.900"/></svg>
<svg class="abs" style="left:1070.300px;top:675px;width:14px;height:14px" viewBox="0 0 14 14"><path d="M12.500 1 V13 M2 1.500 L7.500 7 L2 12.500" fill="none" stroke="#7b7c7e" stroke-width="1.900"/></svg>
</body></html>
